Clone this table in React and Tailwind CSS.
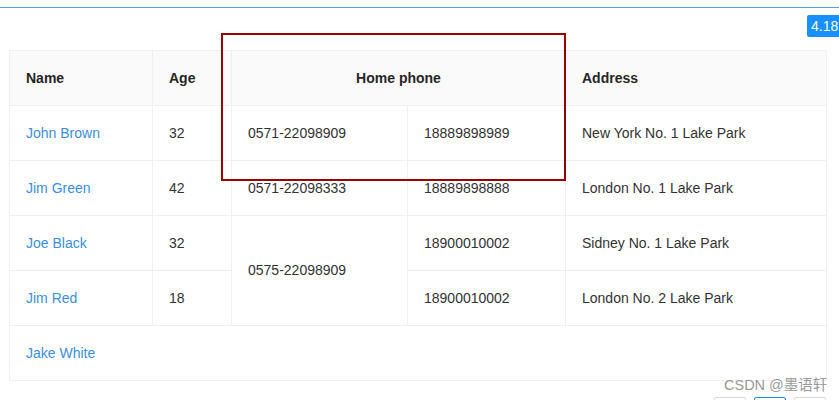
const rows = [
  { name: 'John Brown', age: 32, tel: '0571-22098909', phone: '18889898989', address: 'New York No. 1 Lake Park' },
  { name: 'Jim Green', age: 42, tel: '0571-22098333', phone: '18889898888', address: 'London No. 1 Lake Park' },
  { name: 'Joe Black', age: 32, tel: '0575-22098909', phone: '18900010002', address: 'Sidney No. 1 Lake Park', telSpan: 2 },
  { name: 'Jim Red', age: 18, tel: '0575-22098909', phone: '18900010002', address: 'London No. 2 Lake Park', telSpan: 0 },
];

export default function App() {
  const cell = 'border border-[#f0f0f0] px-[16px] align-middle';

  return (
    <div
      className="relative w-[839px] h-[400px] overflow-hidden bg-white text-[14px] text-[#333]"
      style={{ fontFamily: '"Liberation Sans", "Noto Sans CJK SC", sans-serif' }}
    >
      {/* top line */}
      <div className="h-[7px]" />
      <div className="h-px bg-[#4fa3dc]" />

      {/* version badge */}
      <div className="flex justify-end mt-[7px]">
        <div className="shrink-0 -mr-[12px] h-[22px] w-[44px] rounded-[2px] bg-[#1890ff] pl-[4px] text-[14px] leading-[22px] text-white">
          4.18
        </div>
      </div>

      {/* table */}
      <div className="ml-[9px] mt-[13px] w-[817px]">
        <table className="w-full table-fixed border-collapse">
          <colgroup>
            <col className="w-[143px]" />
            <col className="w-[79px]" />
            <col className="w-[176px]" />
            <col className="w-[158px]" />
            <col className="w-[261px]" />
          </colgroup>
          <thead>
            <tr className="h-[55px] bg-[#fafafa] text-[#262626]">
              <th className={`${cell} text-left font-semibold`}>Name</th>
              <th className={`${cell} text-left font-semibold`}>Age</th>
              <th colSpan={2} className={`${cell} text-center font-semibold`}>Home phone</th>
              <th className={`${cell} text-left font-semibold`}>Address</th>
            </tr>
          </thead>
          <tbody>
            {rows.map((r) => (
              <tr key={r.name} className="h-[55px]">
                <td className={`${cell} text-[#3b8ee0]`}>{r.name}</td>
                <td className={cell}>{r.age}</td>
                {r.telSpan === 0 ? null : (
                  <td rowSpan={r.telSpan || 1} className={cell}>{r.tel}</td>
                )}
                <td className={cell}>{r.phone}</td>
                <td className={cell}>{r.address}</td>
              </tr>
            ))}
            <tr className="h-[55px]">
              <td colSpan={5} className={`${cell} text-[#3b8ee0]`}>Jake White</td>
            </tr>
          </tbody>
        </table>
      </div>

      {/* pagination */}
      <div className="mt-[16px] flex justify-end gap-[8px] pr-[13px]">
        <div className="h-[32px] w-[32px] rounded-[2px] border border-[#d9d9d9]" />
        <div className="h-[32px] w-[32px] rounded-[2px] border border-[#1890ff]" />
        <div className="h-[32px] w-[32px] rounded-[2px] border border-[#d9d9d9]" />
      </div>

      {/* annotation box */}
      <div className="absolute left-[221px] top-[33px] h-[148px] w-[345px] border-2 border-[#990000]" />

      {/* watermark */}
      <div className="absolute left-[724px] top-[375px] text-[14.5px] text-[#999]">CSDN @墨语轩</div>
    </div>
  );
}
